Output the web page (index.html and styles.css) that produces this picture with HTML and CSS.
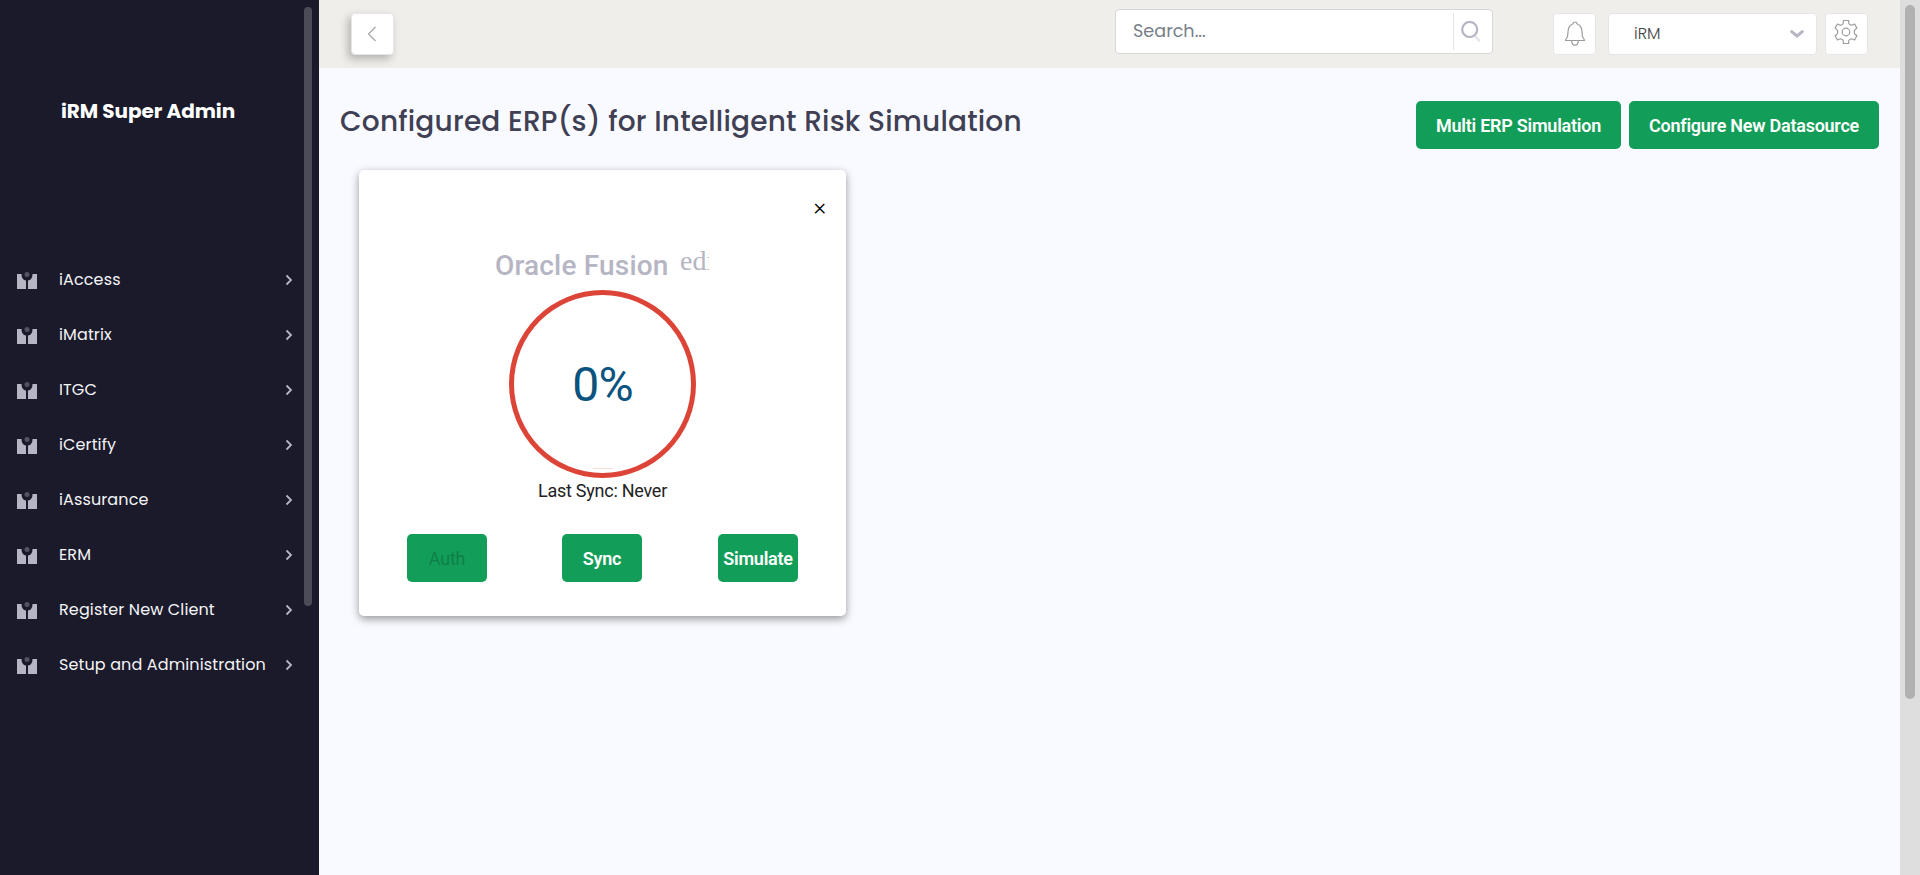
FILE: index.html
```html
<!DOCTYPE html>
<html lang="en">
<head>
<meta charset="utf-8">
<title>iRM</title>
<link rel="stylesheet" href="styles.css">
</head>
<body>
<svg class="defs" width="0" height="0">
  <symbol id="menu-icon" viewBox="0 0 20 18">
    <path d="M0 2H4.500C4.500 6 6 8 9 8.600V17H0ZM20 2H15.500C15.500 6 14 8 11 8.600V17H20Z" fill="#b5b5c3"/>
    <circle cx="10" cy="2.500" r="2.500" fill="#515262"/>
  </symbol>
  <symbol id="chevron" viewBox="0 0 8 12">
    <path d="M1.500 1.500 6 6 1.500 10.500" fill="none" stroke="#b5b5c3" stroke-width="1.800"/>
  </symbol>
</svg>
<div class="app">
  <aside class="sidebar">
    <div class="brand"><span>iRM Super Admin</span></div>
    <nav class="menu">
      <a class="item"><svg class="mi"><use href="#menu-icon"/></svg><span>iAccess</span><svg class="chev"><use href="#chevron"/></svg></a>
      <a class="item"><svg class="mi"><use href="#menu-icon"/></svg><span>iMatrix</span><svg class="chev"><use href="#chevron"/></svg></a>
      <a class="item"><svg class="mi"><use href="#menu-icon"/></svg><span>ITGC</span><svg class="chev"><use href="#chevron"/></svg></a>
      <a class="item"><svg class="mi"><use href="#menu-icon"/></svg><span>iCertify</span><svg class="chev"><use href="#chevron"/></svg></a>
      <a class="item"><svg class="mi"><use href="#menu-icon"/></svg><span>iAssurance</span><svg class="chev"><use href="#chevron"/></svg></a>
      <a class="item"><svg class="mi"><use href="#menu-icon"/></svg><span>ERM</span><svg class="chev"><use href="#chevron"/></svg></a>
      <a class="item"><svg class="mi"><use href="#menu-icon"/></svg><span>Register New Client</span><svg class="chev"><use href="#chevron"/></svg></a>
      <a class="item"><svg class="mi"><use href="#menu-icon"/></svg><span>Setup and Administration</span><svg class="chev"><use href="#chevron"/></svg></a>
    </nav>
    <div class="side-thumb"></div>
  </aside>
  <main class="main">
    <header class="topbar">
      <button class="sq back"><svg width="10" height="16" viewBox="0 0 10 16"><path d="M8.500 1 1.500 8l7 7" fill="none" stroke="#a6a6a6" stroke-width="1.200"/></svg></button>
      <div class="search">
        <span class="placeholder">Search...</span>
        <span class="search-btn"><svg width="20" height="21" viewBox="0 0 20 21"><path d="M14 15 18 19.500" stroke="#e4e4ea" stroke-width="2.400" stroke-linecap="round"/><circle cx="8.700" cy="8.500" r="7.500" fill="none" stroke="#b5b5c3" stroke-width="2.200"/></svg></span>
      </div>
      <button class="sq bell"><svg width="22" height="26" viewBox="0 0 22 26"><path d="M1.500 19.500H20.500C20.500 17.700 18.500 17.500 18.300 14.500C18 9 18 4.600 12.900 2.800C12.900 .4 9.100 .4 9.100 2.800C4 4.600 4 9 3.700 14.500C3.500 17.500 1.500 17.700 1.500 19.500ZM7.700 20C7.800 25.500 14.200 25.500 14.300 20" fill="none" stroke="#9c9c9c" stroke-width="1.200" stroke-linejoin="round"/></svg></button>
      <div class="select"><span>iRM</span><svg width="14" height="9" viewBox="0 0 14 9"><path d="M1.700 1.700Q4.500 4 7 6Q9.500 4 12.300 1.700" fill="none" stroke="#b5b5c3" stroke-width="3" stroke-linecap="round"/></svg></div>
      <button class="sq gear"><svg width="24" height="26" viewBox="0 0 24 26"><path d="M9.300 1.500H14.700V4Q14.800 5 16.200 5.700Q17.500 6.500 18.200 6L20.600 5L22.900 9.100L21 10.700Q20.200 11.300 20.300 12.800Q20.200 14.500 21 15.200L22.900 16.800L20.600 21L18.200 20Q17.500 19.600 16.200 20.300Q14.800 21 14.700 22V24.500H9.300V22Q9.200 21 7.800 20.300Q6.500 19.600 5.800 20L3.400 21L1.100 16.800L3 15.200Q3.800 14.500 3.700 12.800Q3.800 11.300 3 10.700L1.100 9.100L3.400 5L5.800 6Q6.500 6.500 7.800 5.700Q9.200 5 9.300 4Z" fill="none" stroke="#9c9c9c" stroke-width="1.200" stroke-linejoin="round"/><circle cx="12" cy="13" r="3.800" fill="none" stroke="#9c9c9c" stroke-width="1.200"/></svg></button>
    </header>
    <section class="heading">
      <h1>Configured ERP(s) for Intelligent Risk Simulation</h1>
      <div class="actions">
        <button class="btn multi">Multi ERP Simulation</button>
        <button class="btn config">Configure New Datasource</button>
      </div>
    </section>
    <article class="card">
      <div class="close">×</div>
      <div class="name"><h2>Oracle Fusion</h2><span class="edit">edit</span></div>
      <div class="ring"><span>0%</span><i></i></div>
      <p class="sync">Last Sync: Never</p>
      <div class="card-actions">
        <button class="btn small disabled">Auth</button>
        <button class="btn small">Sync</button>
        <button class="btn small">Simulate</button>
      </div>
    </article>
  </main>
  <div class="scrollbar"><div class="thumb"></div></div>
</div>
</body>
</html>
```
FILE: styles.css
```css
* { box-sizing: border-box; }
body { margin: 0; overflow: hidden; font-family: Poppins, Inter, sans-serif; }
.defs { position: absolute; }
.app { display: flex; height: 875px; background: #f9faff; }
.sidebar { position: relative; width: 319px; background: #1a1a2b; flex: none; }
.brand { height: 252px; padding: 93px 0 0 61px; color: #fff; font-size: 20px; line-height: 36px; font-weight: 700; white-space: nowrap; letter-spacing: -.05px; }
.menu { display: flex; flex-direction: column; }
.item { display: flex; align-items: center; height: 55px; padding: 0 26px 0 17px; color: #f4f4f6; font-size: 16px; letter-spacing: .12px; white-space: nowrap; }
.mi { width: 20px; height: 18px; margin: 3px 22px 0 0; flex: none; }
.chev { width: 8px; height: 12px; margin-left: auto; flex: none; }
.side-thumb { position: absolute; left: 304px; top: 7px; width: 8px; height: 599px; border-radius: 4px; background: #4b4c58; }
.main { flex: 1; min-width: 0; }
.topbar { display: flex; height: 68px; padding: 9px 32px 0 32px; background: #efeeea; }
button { font-family: inherit; border: 0; padding: 0; }
.sq { display: flex; align-items: center; justify-content: center; width: 43px; height: 42px; margin-top: 4px; border: 1px solid #e6e6e6; border-radius: 4px; background: #fff; flex: none; }
.back { box-shadow: -3px 4px 9px rgba(0,0,0,.25); }
.back svg { margin-right: 1px; }
.search { display: flex; width: 378px; height: 45px; margin-left: 721px; padding: 3px 0; border: 1px solid #d8d7d5; border-radius: 4px; background: #fff; flex: none; }
.placeholder { flex: 1; padding-left: 17px; line-height: 37px; color: #77808a; font-size: 17.600px; }
.search-btn { width: 39px; height: 37px; padding: 8px 0 0 7px; border-left: 1px solid #e3e3e3; }
.bell { margin-left: 60px; }
.bell svg { margin: -1px 0 0 1px; }
.gear svg { margin: -4px 2px 0 0; }
.select { display: flex; align-items: center; justify-content: space-between; width: 209px; height: 42px; margin: 4px 8px 0 12px; padding: 0 12px 2px 25px; border: 1px solid #e6e6e6; border-radius: 4px; background: #fff; color: #444; font-size: 16px; font-weight: 300; flex: none; }
.select svg { margin-top: 3px; }
.heading { display: flex; justify-content: space-between; height: 102px; padding: 33px 21px 0 21px; }
h1 { margin: 3px 0 0; color: #3f4053; font-size: 28px; line-height: 36px; font-weight: 500; letter-spacing: .2px; white-space: nowrap; }
.actions { display: flex; gap: 8px; }
.btn { height: 48px; padding-top: 1px; border-radius: 5px; background: #129e58; color: #fff; font: 600 18px/47px Roboto, sans-serif; letter-spacing: -.25px; white-space: nowrap; }
.multi { width: 205px; }
.config { width: 250px; }
.card { width: 487px; height: 446px; margin-left: 40px; padding-top: 23px; border-radius: 5px; background: #fff; box-shadow: 0 3px 9px rgba(0,0,0,.4); font-family: Roboto, sans-serif; }
.close { height: 28px; padding-right: 20px; text-align: right; font-size: 24px; line-height: 28px; font-weight: 300; color: #000; }
.name { display: flex; height: 69px; padding-left: 136px; color: #b5b5c3; }
.name h2 { width: 174px; margin: 27px 0 0; font-size: 28px; line-height: 36px; font-weight: 500; letter-spacing: .18px; white-space: nowrap; }
.edit { width: 29px; height: 36px; margin: 22px 0 0 11px; overflow: hidden; font: 28px/36px "Liberation Serif", serif; }
.ring { position: relative; display: flex; justify-content: center; align-items: center; width: 187px; height: 188px; margin-left: 150px; border: 5px solid #dc4437; border-radius: 50%; color: #0a5380; font-size: 48px; letter-spacing: -.8px; }
.ring i { position: absolute; left: 79px; bottom: 4px; width: 20px; height: 1px; background: #f8dcda; }
.sync { margin: 0; color: #222; font-size: 18px; line-height: 26px; text-align: center; letter-spacing: -.25px; }
.card-actions { display: flex; gap: 75px; padding: 30px 0 0 48px; }
.small { width: 80px; }
.small:last-child { margin-left: 1px; }
.disabled { color: #0f7f4a; font-weight: 400; }
.scrollbar { width: 20px; padding: 5px; background: #dedede; }
.thumb { height: 694px; width: 10px; border-radius: 5px; background: #b1b1b1; }
```
